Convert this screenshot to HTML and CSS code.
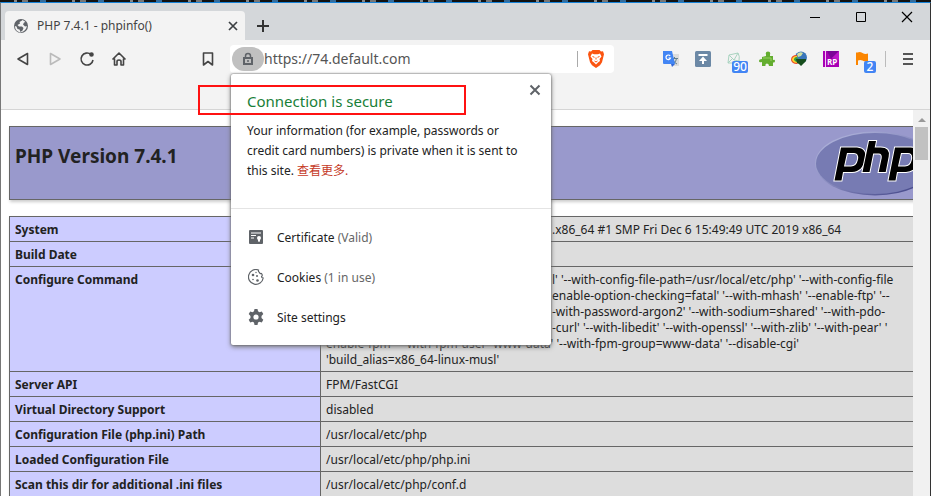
FILE: index.html
```
<!DOCTYPE html>
<html lang="en">
<head>
<meta charset="utf-8">
<title>PHP 7.4.1 - phpinfo()</title>
<link rel="stylesheet" href="styles.css">
</head>
<body>
<div class="desktop-strip" aria-hidden="true"></div>
<div class="browser">
  <header class="tabstrip">
    <div class="tab">
      <svg class="tab-icon" viewBox="0 0 16 16"><circle cx="8" cy="8" r="7" fill="#5f6368"/><path d="M9 2.500 6.500 4 7 5.500 4.500 7 6 8.500 9 8.500 10.500 10 9.500 12.500 7.500 14 6.500 11.500 4.500 11 3.500 8.500 1.800 8Q2 11 4 13l3 1.500 2-.500Q13.500 12 13.800 8L12 8.500 10 6.500 11 4.500 12.500 4Q11 2.500 9 2z" fill="#f3f3f3"/></svg>
      <span class="tab-title">PHP 7.4.1 - phpinfo()</span>
      <button class="bare" aria-label="Close tab"><svg width="10" height="10" viewBox="0 0 10 10"><path d="M1 1l8 8M9 1l-8 8" stroke="#3c4043" stroke-width="1.700"/></svg></button>
    </div>
    <button class="bare new-tab" aria-label="New tab"><svg width="12" height="12" viewBox="0 0 12 12"><path d="M6 0v12M0 6h12" stroke="#333" stroke-width="2"/></svg></button>
    <div class="window-controls">
      <button class="bare" aria-label="Minimize"><svg width="12" height="12" viewBox="0 0 12 12"><path d="M1 6.500h10" stroke="#000"/></svg></button>
      <button class="bare" aria-label="Maximize"><svg width="12" height="12" viewBox="0 0 12 12"><path d="M1.500 1.500h9v9h-9z" fill="none" stroke="#000"/></svg></button>
      <button class="bare" aria-label="Close"><svg width="12" height="12" viewBox="0 0 12 12"><path d="M1 1l10 10M11 1L1 11" stroke="#000" stroke-width="1.200"/></svg></button>
    </div>
  </header>
  <div class="toolbar">
    <nav class="nav">
      <button class="bare" aria-label="Back"><svg viewBox="0 0 16 16"><path d="M12.500 2.500v11L3 8z"/></svg></button>
      <button class="bare dim" aria-label="Forward"><svg viewBox="0 0 16 16"><path d="M3.500 2.500v11L13 8z"/></svg></button>
      <button class="bare" aria-label="Reload"><svg viewBox="0 0 16 16"><path d="M12 3.500A6 6 0 1 0 14 9"/><circle cx="12.500" cy="3.500" r="1.500" fill="#444"/></svg></button>
      <button class="bare" aria-label="Home"><svg viewBox="0 0 16 16"><path d="M1.500 8.500 8 2l6.500 6.500M3.500 7.500V14H6V10.500Q6 9 8 9t2 1.500V14h2.500V7.500"/></svg></button>
    </nav>
    <button class="bare bookmark" aria-label="Bookmark"><svg viewBox="0 0 16 16"><path d="M3.500 2h9v12L8 10.500 3.500 14z"/></svg></button>
    <div class="address">
      <button class="lock" aria-label="View site information"><svg width="14" height="14" viewBox="0 0 14 14"><path d="M4.500 6V4a2.500 2.500 0 0 1 5 0v2" fill="none" stroke="#5f6368" stroke-width="1.500"/><path d="M3 6h8v6H3z" fill="none" stroke="#5f6368" stroke-width="2"/><circle cx="7" cy="9" r="1" fill="#5f6368"/></svg></button>
      <input class="url" type="text" aria-label="Address" value="https://74.default.com">
      <button class="bare shield" aria-label="Shields"><svg width="16" height="18" viewBox="0 0 16 18"><path d="M4.500 0h7l1.500 1.500 2-.200 1 3-.500 2-1.500 6-2 3L8 18l-4-2.700-2-3-1.500-6L0 4.300l1-3 2 .200z" fill="#fb5410"/><path d="M4 3.500l2 .700h4l2-.700 1.500 3L11.500 9l.500 2-2 1.500-2 2-2-2L4 11l.500-2-2-2.500z" fill="#fff"/><path d="M4.500 6.500l2 .800M11.500 6.500l-2 .800M6.500 11 8 12l1.500-1M8 7.500v2" stroke="#fb5410" fill="none"/></svg></button>
    </div>
    <div class="extensions">
      <button class="bare" aria-label="Translate"><svg viewBox="0 0 16 16"><path d="M6 3h10v12H9z" fill="#dcdcdc"/><path d="M8.500 7.500H15M11.500 6v1.500M9.500 13q4-2 4-5.500M10 9q1.500 3 4 4" stroke="#607d8b" fill="none"/><path d="M0 0h9l3 13H1q-1 0-1-1z" fill="#4285f4"/><path d="M8 13h4l-3 3z" fill="#3367d6"/><path d="M7.200 5A2.300 2.300 0 1 0 7.500 7H5.500" stroke="#fff" fill="none" stroke-width="1.200"/></svg></button>
      <button class="bare" aria-label="Upload"><svg viewBox="0 0 16 16"><rect width="16" height="16" rx="1.500" fill="#6b88a5"/><path d="M3.500 4h9M8 13V7" stroke="#fff" stroke-width="2"/><path d="M4 10 8 5.500 12 10z" fill="#fff"/></svg></button>
      <button class="bare" aria-label="Mail, 90 unread"><svg viewBox="0 0 16 16"><path d="M1 12 2 4l5 5 4-7q2 3 1 8M1 12l4-4M2 4l9-2M7 9l5 1M1 12h5" fill="none" stroke="#a9d3c0"/></svg><span class="badge">90</span></button>
      <button class="bare" aria-label="Extension"><svg viewBox="0 0 16 16"><path d="M7 5V3.500Q6 .500 9 .500t2 3V5h3v4q2-1 2 1t-2 1.500V15h-4q0-2.500-2-2.500T6.500 15H3v-4q-3 1-3-1t3-2V6z" fill="#63ad2f"/><path d="M4 7h8v3" stroke="#96cf62" fill="none"/></svg></button>
      <button class="bare" aria-label="Download manager"><svg viewBox="0 0 16 16"><circle cx="10" cy="6.500" r="6" fill="#3976ba"/><path d="M6 3q3-3 6-1L10 5 7 6z" fill="#cfdfa0"/><path d="M6 4Q0 4 0 9q1 4 6 4l2-2L6 9z" fill="#e64524"/><path d="M6 5Q1 5 1 9q1 3 5 3l1-2z" fill="#ffd42b"/><path d="M6 6Q3 6 3 9q1 2 4 2l1-2z" fill="#2d9a45"/><path d="M5 8h10v2l-5 5-2-2-2-1z" fill="#164d1c"/></svg></button>
      <button class="bare" aria-label="RP"><svg viewBox="0 0 16 16"><path d="M0 0h16v16H0z" fill="#a800b5"/><path d="M4 0h12L8 8z" fill="#7c0798"/><path d="M16 0v9L9 7z" fill="#bd19ca"/><path d="M2.500 0v16" stroke="#f3c5f5"/><text x="4" y="14" class="rp">RP</text></svg></button>
      <button class="bare" aria-label="Flags, 2"><svg viewBox="0 0 16 16"><path d="M1 1.500h1.500Q5 .500 7.500 2T13 2.500V10Q10 11 7.500 9.500 5 8.500 3 9.500V14H1z" fill="#fb8500"/></svg><span class="badge">2</span></button>
    </div>
    <button class="bare menu" aria-label="Menu"><svg viewBox="0 0 16 16"><path d="M3 3h10M3 8h10M3 13h10"/></svg></button>
  </div>
  <div class="bookmarks-bar"></div>
  <div class="viewport">
    <main class="page">
      <div class="banner">
        <h1>PHP Version 7.4.1</h1>
        <svg class="php-logo" viewBox="0 0 120 65" role="img" aria-label="PHP logo"><defs><linearGradient id="rim" x1="0" y1="0" x2="1" y2="1"><stop offset="0" stop-color="#b8bce0"/><stop offset=".4" stop-color="#9295c6"/><stop offset="1" stop-color="#33367b"/></linearGradient></defs><ellipse cx="60" cy="32.500" rx="60" ry="32" fill="url(#rim)"/><ellipse cx="60" cy="32.500" rx="59" ry="30.500" fill="#777bb3"/><g class="mark"><path d="M26 16.500h16q10 1 8 11-2 13-13 13.500h-9l-1.500 8.500h-7zM32 22l-3 13.500h7q5.500 0 7-7 1-6.500-4-6.500z"/><path d="M54 10h7l-1.300 6.500h6q9.500 0 8 9l-3 15.500h-7l3-14q.5-4.500-3-4.500h-5.500L54.500 41h-7z"/><path d="M80 16.500h16q10 1 8 11-2 13-13 13.500h-9l-1.500 8.500h-7zM86 22l-3 13.500h7q5.500 0 7-7 1-6.500-4-6.500z"/></g></svg>
      </div>
      <table class="info">
        <tbody>
        <tr><th scope="row">System</th><td><span class="tail">.x86_64 #1 SMP Fri Dec 6 15:49:49 UTC 2019 x86_64</span></td></tr>
        <tr><th scope="row">Build Date</th><td></td></tr>
        <tr><th scope="row">Configure Command</th><td><span class="tail">l' '--with-config-file-path=/usr/local/etc/php' '--with-config-file</span><span class="tail">enable-option-checking=fatal' '--with-mhash' '--enable-ftp' '--</span><span class="tail">-with-password-argon2' '--with-sodium=shared' '--with-pdo-</span><span class="tail">-curl' '--with-libedit' '--with-openssl' '--with-zlib' '--with-pear' '</span>enable-fpm' '--with-fpm-user=www-data' '--with-fpm-group=www-data' '--disable-cgi'<br>'build_alias=x86_64-linux-musl'</td></tr>
        <tr><th scope="row">Server API</th><td>FPM/FastCGI</td></tr>
        <tr><th scope="row">Virtual Directory Support</th><td>disabled</td></tr>
        <tr><th scope="row">Configuration File (php.ini) Path</th><td>/usr/local/etc/php</td></tr>
        <tr><th scope="row">Loaded Configuration File</th><td>/usr/local/etc/php/php.ini</td></tr>
        <tr><th scope="row">Scan this dir for additional .ini files</th><td>/usr/local/etc/php/conf.d</td></tr>
        </tbody>
      </table>
    </main>
    <div class="scrollbar" aria-hidden="true"><div class="arrow"></div><div class="thumb"></div></div>
  </div>
  <section class="popup" aria-label="Site information">
    <div class="popup-info">
      <h2>Connection is secure</h2>
      <p>Your information (for example, passwords or<br>credit card numbers) is private when it is sent to<br>this site. <a href="#more">查看更多</a><span class="stop">.</span></p>
      <button class="bare popup-close" aria-label="Close"><svg width="12" height="12" viewBox="0 0 12 12"><path d="M1.500 1.500l9 9M10.500 1.500l-9 9" stroke="#5f6368" stroke-width="2"/></svg></button>
    </div>
    <div class="popup-list">
      <button class="item"><svg viewBox="0 0 16 16"><path d="M2 1h12q1 0 1 1v12q0 1-1 1H2q-1 0-1-1V2q0-1 1-1z" fill="#5f6368"/><path d="M3 4h10M3 6.500h5M3 9h3" stroke="#fff" stroke-width="1.200"/><circle cx="11" cy="9" r="2" fill="#fff"/><path d="M10 10h2v3l-1-.700-1 .700z" fill="#fff"/></svg><span>Certificate <span class="muted">(Valid)</span></span></button>
      <button class="item"><svg viewBox="0 0 16 16"><path d="M10.500 1A7.400 7.400 0 1 0 15.200 9Q13.500 9 13.500 7.500 15 6.500 13.500 4.500 12 5 11.500 3.500 10 2.500 10.500 1z" fill="none" stroke="#5f6368" stroke-width="1.200"/><g fill="#5f6368"><circle cx="5" cy="6" r="1.300"/><circle cx="9" cy="7" r="1"/><circle cx="9.500" cy="11.500" r="1.300"/><circle cx="5" cy="10.500" r=".8"/><circle cx="8" cy="3.500" r=".7"/></g></svg><span>Cookies <span class="muted">(1 in use)</span></span></button>
      <button class="item"><svg viewBox="0 0 16 16"><path d="M6.500 0h3l.5 2.300 1.500.9 2.300-.8 1.500 2.700L13.500 7v2l1.800 1.700-1.500 2.700-2.300-.7-1.500.9-.5 2.400h-3L6 13.600l-1.500-.9-2.300.7-1.500-2.700L2.500 9V7L.7 5.100l1.500-2.700 2.300.8L6 2.300z" fill="#5f6368"/><circle cx="8" cy="8" r="2.600" fill="#fff"/></svg><span>Site settings</span></button>
    </div>
  </section>
  <div class="highlight" aria-hidden="true"></div>
</div>
</body>
</html>
```
FILE: styles.css
```
* { box-sizing: border-box; }

body {
  margin: 0;
  height: 100vh;
  display: flex;
  flex-direction: column;
  overflow: hidden;
  background: #111;
  color: #222;
  font-family: "Noto Sans", "Noto Sans CJK SC", sans-serif;
  font-size: 12px;
}

button, input { font: inherit; color: inherit; border: 0; padding: 0; }

.bare {
  position: relative;
  display: flex;
  align-items: center;
  justify-content: center;
  background: none;
}

.desktop-strip {
  flex: none;
  height: 2px;
  background: repeating-linear-gradient(90deg, #111 0 14px, #888 14px 17px, #111 17px 22px, #777 22px 28px, #111 28px 40px, #356c9b 40px 46px, #111 46px 58px);
}

.browser {
  position: relative;
  flex: 1;
  min-height: 0;
  display: flex;
  flex-direction: column;
  border-top: 1px solid #1883d7;
  border-left: 1px solid #777;
  border-right: 1px solid #333;
  background: #fff;
}

.tabstrip { display: flex; flex: none; height: 37px; background: #d4d7da; }

.tab {
  display: flex;
  align-items: center;
  gap: 8px;
  width: 240px;
  margin: 8px 0 0 4px;
  padding: 0 7px 0 8px;
  border-radius: 4px 4px 0 0;
  background: #f3f3f3;
}

.tab-icon { width: 16px; height: 16px; }
.tab-title { flex: 1; color: #444; }
.new-tab { width: 36px; margin-top: 9px; }
.window-controls { display: flex; gap: 34px; margin: 8px 17px 0 auto; height: 12px; }

.toolbar {
  display: flex;
  align-items: center;
  flex: none;
  height: 38px;
  padding: 0 14px;
  background: #f3f3f3;
}

.toolbar svg { display: block; }
.nav { display: flex; gap: 16px; }
.nav svg, .bookmark svg, .menu svg {
  width: 16px;
  height: 16px;
  fill: none;
  stroke: #444;
  stroke-width: 1.6;
  stroke-linejoin: round;
}
.nav .dim svg { stroke: #bbb; }
.bookmark { margin-left: 73px; }

.address {
  display: flex;
  align-items: center;
  flex: 1;
  height: 28px;
  margin: 0 49px 0 14px;
  padding-left: 2px;
  border-radius: 4px;
  background: #fff;
}

.lock {
  display: flex;
  align-items: center;
  justify-content: center;
  flex: none;
  width: 32px;
  height: 24px;
  border-radius: 12px;
  background: #c0c0c0;
}

.url {
  flex: 1;
  min-width: 0;
  padding-bottom: 2px;
  background: none;
  font-size: 14px;
  color: #555;
}
.shield { width: 37px; height: 16px; border-left: 1px solid #aaa; }

.extensions { display: flex; gap: 16px; padding-right: 14px; }
.extensions svg { width: 16px; height: 16px; }
.rp { font: bold 8px "Open Sans", sans-serif; fill: #fff; }

.badge {
  position: absolute;
  left: 5px;
  top: 10px;
  width: 16px;
  border-radius: 2px;
  background: #4285f4;
  color: #fff;
  font-size: 12px;
  font-weight: 500;
  line-height: 12px;
  text-align: center;
}

.extensions .bare:last-child .badge { left: 9px; width: 12px; }

.menu { height: 16px; padding-left: 14px; border-left: 1px solid #bbb; }
.menu svg { stroke: #555; stroke-width: 2; }

.bookmarks-bar { flex: none; height: 32px; background: #f3f3f3; border-bottom: 1px solid #d5d5d5; }

.viewport { display: flex; flex: 1; min-height: 0; }
.page { flex: 1; min-width: 0; overflow: hidden; padding: 16px 0 0 8px; }

.banner {
  display: flex;
  justify-content: space-between;
  align-items: flex-start;
  width: 934px;
  height: 74px;
  margin-bottom: 16px;
  padding: 4px 7px 4px 5px;
  border: 1px solid #666;
  background: #99c;
  box-shadow: 1px 2px 3px #ccc;
}

.banner h1 { margin: 12px 0 0; font-size: 19px; line-height: 26px; }
.php-logo { width: 120px; height: 65px; }
.mark { fill: #000; stroke: #fff; stroke-width: 2; paint-order: stroke; fill-rule: evenodd; }

.info { width: 934px; border-collapse: collapse; box-shadow: 1px 2px 3px #ccc; }
.info th, .info td {
  padding: 5px 5px 3px;
  border: 1px solid #666;
  line-height: 16px;
  text-align: left;
  vertical-align: top;
}
.info th { width: 311px; background: #ccf; }
.info td { background: #ddd; white-space: nowrap; }
.tail { display: block; padding-left: 226px; }

.scrollbar { width: 17px; padding: 5px 2px 0; background: #f1f1f1; }
.arrow {
  width: 0;
  margin: 3px auto 5px;
  border: 4px solid transparent;
  border-top: 0;
  border-bottom-color: #999;
}
.thumb { height: 33px; background: #c1c1c1; }

.popup {
  position: absolute;
  left: 230px;
  top: 71px;
  width: 320px;
  border-radius: 2px;
  background: #fff;
  box-shadow: 0 0 2px #555, 0 2px 5px #777;
}

.popup-info { position: relative; height: 135px; padding: 17px 16px; border-bottom: 1px solid #e4e4e4; }
.popup h2 { margin: 0; color: #188038; font-size: 15px; font-weight: 400; line-height: 20px; }
.popup p { margin: 10px 0 0; line-height: 20px; white-space: nowrap; }
.popup a { color: #c5391f; text-decoration: none; }
.stop { color: #c5391f; }
.popup-close { position: absolute; right: 10px; top: 10px; }

.popup-list { padding: 8px 0; }
.item {
  display: flex;
  align-items: center;
  gap: 13px;
  width: 100%;
  height: 40px;
  padding: 0 17px;
  background: none;
}
.item svg { width: 16px; height: 16px; }
.muted { color: #666; }

.highlight {
  position: absolute;
  left: 197px;
  top: 82px;
  width: 268px;
  height: 30px;
  border: 2px solid #f11;
}
```
